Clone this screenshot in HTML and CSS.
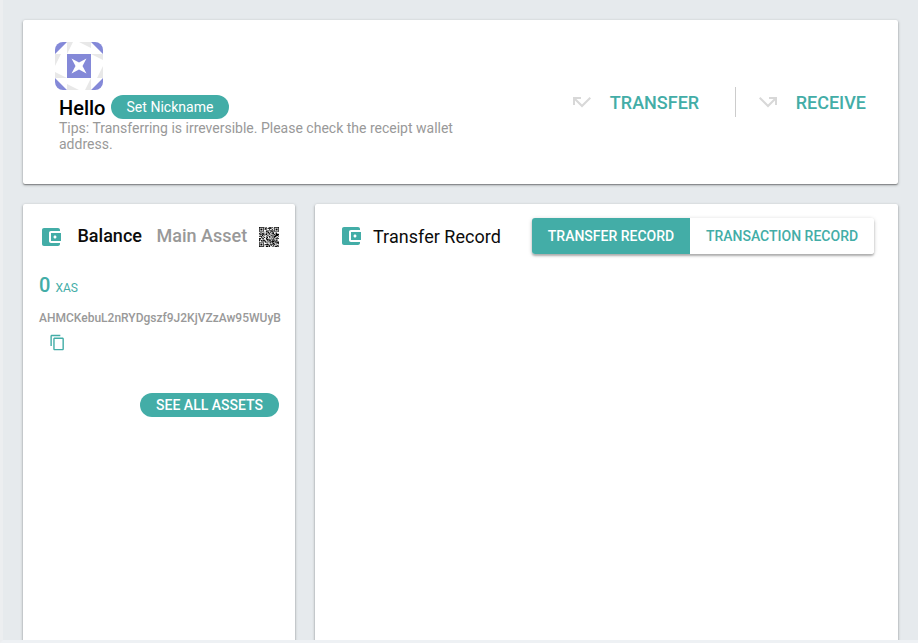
FILE: index.html
```
<!DOCTYPE html>
<html lang="en">
<head>
<meta charset="utf-8">
<title>Wallet</title>
<link rel="stylesheet" href="styles.css">
</head>
<body>
<svg class="defs" aria-hidden="true">
  <symbol id="wallet" viewBox="0 0 24 24"><path d="M21 18v1c0 1.1-.9 2-2 2H5c-1.11 0-2-.9-2-2V5c0-1.1.89-2 2-2h14c1.1 0 2 .9 2 2v1h-9c-1.11 0-2 .9-2 2v8c0 1.1.89 2 2 2h9zm-9-2h10V8H12v8zm4-2.5c-.83 0-1.5-.67-1.5-1.5s.67-1.5 1.5-1.5 1.5.67 1.5 1.5-.67 1.5-1.5 1.5z"/></symbol>
</svg>
<main class="page">
  <section class="card profile">
    <div class="user">
      <svg class="avatar" viewBox="0 0 48 48">
        <rect width="48" height="48" fill="#fff"/>
        <path fill="#8489d8" d="M0 0H12L0 12Z M36 0H48V12Z M48 36V48H36Z M0 36L12 48H0Z"/>
        <path fill="#e8e8e8" d="M12 0h6L12 12Z M24 0h12v6Z M30 48L36 36V48Z M12 42L24 48H12Z M0 12h6L0 24Z M36 12h12v6Z M42 36L48 24V36Z M0 30L12 36H0Z"/>
        <path fill="#8489d8" d="M12 12H36V36H12Z"/>
        <path fill="#fff" d="M16.500 16.500L24 20.500L31.500 16.500L27.500 24L31.500 31.500L24 27.500L16.500 31.500L20.500 24Z"/>
      </svg>
      <div class="greeting"><span class="hello">Hello</span><button class="pill nickname">Set Nickname</button></div>
      <p class="tips">Tips: Transferring is irreversible. Please check the receipt wallet address.</p>
    </div>
    <nav class="actions">
      <a class="action"><svg viewBox="0 0 24 24"><path d="M19.590 7L12 14.590 6.410 9H11V7H3v8h2v-4.590l7 7 9-9z"/></svg><span>TRANSFER</span></a>
      <a class="action receive"><svg viewBox="0 0 24 24"><path d="M3 8.410l9 9 7-7V15h2V7h-8v2h4.590L12 14.590 4.410 7 3 8.410z"/></svg><span>RECEIVE</span></a>
    </nav>
  </section>
  <div class="columns">
    <section class="card balance">
      <div class="heading"><svg class="icon"><use href="#wallet"/></svg><h2>Balance</h2><span class="asset">Main Asset</span><svg class="qr" viewBox="0 0 29 29"><path id="modules"/></svg></div>
      <div class="amount"><b>0</b><span>XAS</span></div>
      <div class="address">AHMCKebuL2nRYDgszf9J2KjVZzAw95WUyB</div>
      <svg class="copy" viewBox="0 0 24 24"><path d="M16 1H4c-1.100 0-2 .9-2 2v14h2V3h12V1zm3 4H8c-1.100 0-2 .9-2 2v14c0 1.100.9 2 2 2h11c1.100 0 2-.9 2-2V7c0-1.100-.9-2-2-2zm0 16H8V7h11v14z"/></svg>
      <button class="pill assets">SEE ALL ASSETS</button>
    </section>
    <section class="card records">
      <div class="record-head"><svg class="icon"><use href="#wallet"/></svg><h2>Transfer Record</h2>
        <div class="tabs"><button class="tab active">TRANSFER RECORD</button><button class="tab">TRANSACTION RECORD</button></div>
      </div>
    </section>
  </div>
</main>
<script src="script.js"></script>
</body>
</html>
```

FILE: styles.css
```
* { box-sizing: border-box; }
body {
  margin: 0;
  height: 643px;
  overflow: hidden;
  background: #e6eaed;
  border-left: 3px solid #eceef0;
  border-bottom: 3px solid #eef1f4;
  font-family: Roboto, sans-serif;
  color: #0c0c0c;
}
button { border: 0; margin: 0; font-family: inherit; color: #fff; background: #43ada7; white-space: nowrap; }
h2, p { margin: 0; }
.defs { display: none; }
.page { height: 640px; padding: 20px 20px 0; overflow: hidden; }
.card {
  background: #fff;
  border-radius: 2px;
  box-shadow: 0 1px 3px rgba(0,0,0,.35), 0 1px 1px rgba(0,0,0,.25);
}
.profile { height: 164px; display: flex; justify-content: space-between; padding: 22px 32px 0; }
.user { width: 430px; }
.avatar { display: block; width: 48px; height: 48px; border-radius: 8px; }
.greeting { display: flex; align-items: center; height: 30px; padding: 4px 0 0 4px; }
.hello { width: 52px; padding-top: 2px; font-size: 20px; font-weight: 500; line-height: 24px; color: #000; }
.pill { border-radius: 12px; height: 24px; padding: 0; line-height: 24px; }
.nickname { width: 118px; font-size: 14px; letter-spacing: .03px; }
.tips { padding-left: 4px; font-size: 14px; line-height: 16px; color: #999; }
.actions { display: flex; height: 30px; margin-top: 45px; }
.action { display: flex; align-items: center; color: #43ada7; font-size: 18px; font-weight: 500; }
.action svg { width: 24px; height: 24px; margin-right: 16px; fill: #d8d8d8; }
.receive { margin-left: 35.500px; padding-left: 20px; border-left: 1px solid #ccc; }
.columns { display: grid; grid-template-columns: 272px 583px; gap: 20px; margin-top: 20px; height: 480px; }
.balance { display: flex; flex-direction: column; padding: 20px 16px; }
.heading { display: flex; align-items: center; height: 25px; }
.icon { width: 24px; height: 24px; fill: #43ada7; flex: none; }
h2, .asset { font-size: 18px; line-height: 24px; white-space: nowrap; }
.heading h2 { width: 79px; margin-left: 14.500px; font-weight: 500; }
.heading h2, .asset { padding-bottom: 2px; }
.asset { width: 102.500px; color: #999; font-weight: 500; }
.qr { width: 20px; height: 20px; flex: none; margin-top: 1px; }
.amount { display: flex; align-items: baseline; margin-top: 24px; line-height: 24px; color: #43ada7; }
.amount b { font-size: 20px; font-weight: 500; margin-right: 5px; }
.amount span { font-size: 12px; }
.address { margin-top: 10px; font-size: 12px; line-height: 16px; font-weight: 500; color: #999; white-space: nowrap; }
.copy { width: 17px; height: 17px; margin: 8px 0 0 9.500px; fill: #43ada7; }
.assets { align-self: flex-end; width: 139px; margin-top: 42px; font-size: 14px; font-weight: 500; }
.records { padding: 14px 24px; }
.record-head { display: flex; align-items: center; height: 36px; }
.record-head h2 { width: 159px; margin-left: 10px; padding-top: 2px; font-weight: 400; letter-spacing: .04px; }
.tabs { display: flex; width: 342px; height: 36px; border-radius: 3px; overflow: hidden; box-shadow: 0 1px 4px rgba(0,0,0,.2), 0 2px 2px rgba(0,0,0,.22); }
.tab { width: 184px; padding: 0; background: #fff; color: #43ada7; font-size: 14px; font-weight: 500; }
.tab.active { width: 158px; background: #43ada7; color: #fff; }
```

FILE: script.js
```
const size = 29;
let seed = 41;
let d = "";
function finder(x, y) {
  const at = (a, b) => a >= -1 && a <= 7 && b >= -1 && b <= 7
    ? Math.max(Math.abs(a - 3), Math.abs(b - 3)) : null;
  for (const [cx, cy] of [[0, 0], [size - 7, 0], [0, size - 7]]) {
    const r = at(x - cx, y - cy);
    if (r !== null) return r === 3 || r < 2;
  }
  return null;
}
for (let y = 0; y < size; y++) {
  for (let x = 0; x < size; x++) {
    seed = (seed * 16807) % 2147483647;
    const f = finder(x, y);
    if (f === null ? seed / 2147483647 > 0.46 : f) d += `M${x} ${y}h1v1h-1z`;
  }
}
document.getElementById("modules").setAttribute("d", d);
```
